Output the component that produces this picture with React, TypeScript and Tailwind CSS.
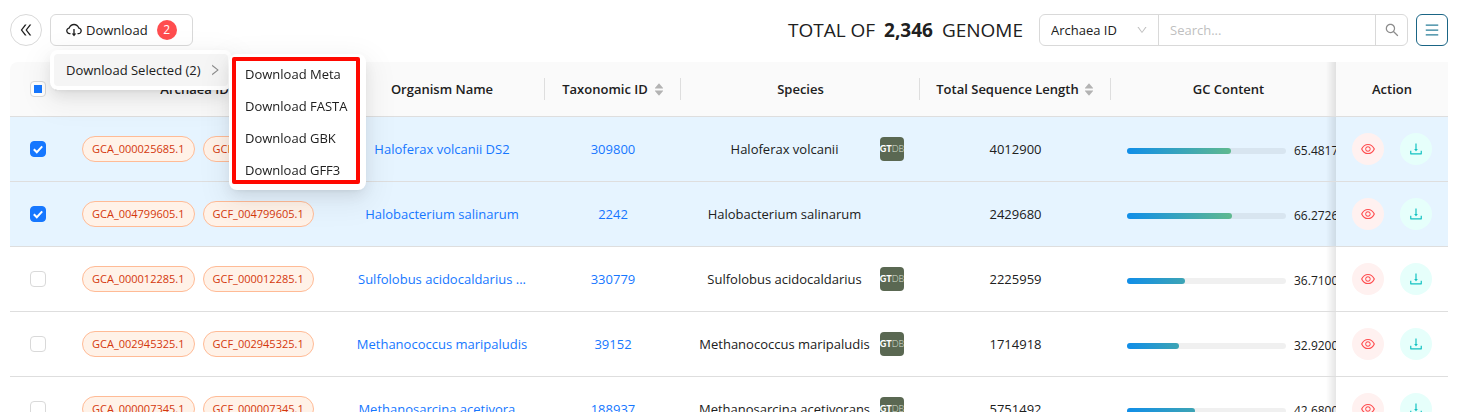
import React, { useEffect, useRef } from "react";
import {
  AiOutlineCloudDownload,
  AiOutlineDoubleLeft,
  AiOutlineDown,
  AiOutlineDownload,
  AiOutlineEye,
  AiOutlineMenu,
  AiOutlineRight,
  AiOutlineSearch,
  AiFillCaretDown,
  AiFillCaretUp,
} from "react-icons/ai";

type Genome = {
  gca: string;
  gcf: string;
  organism: string;
  taxId: string;
  species: string;
  gtdb: boolean;
  length: string;
  gc: string;
  selected: boolean;
};

const genomes: Genome[] = [
  { gca: "GCA_000025685.1", gcf: "GCF_000025685.1", organism: "Haloferax volcanii DS2", taxId: "309800", species: "Haloferax volcanii", gtdb: true, length: "4012900", gc: "65.4817", selected: true },
  { gca: "GCA_004799605.1", gcf: "GCF_004799605.1", organism: "Halobacterium salinarum", taxId: "2242", species: "Halobacterium salinarum", gtdb: false, length: "2429680", gc: "66.2726", selected: true },
  { gca: "GCA_000012285.1", gcf: "GCF_000012285.1", organism: "Sulfolobus acidocaldarius ...", taxId: "330779", species: "Sulfolobus acidocaldarius", gtdb: true, length: "2225959", gc: "36.7100", selected: false },
  { gca: "GCA_002945325.1", gcf: "GCF_002945325.1", organism: "Methanococcus maripaludis", taxId: "39152", species: "Methanococcus maripaludis", gtdb: true, length: "1714918", gc: "32.9200", selected: false },
  { gca: "GCA_000007345.1", gcf: "GCF_000007345.1", organism: "Methanosarcina acetivora...", taxId: "188937", species: "Methanosarcina acetivorans", gtdb: true, length: "5751492", gc: "42.6800", selected: false },
];

const downloads = ["Download Meta", "Download FASTA", "Download GBK", "Download GFF3"];

function Sorter() {
  return (
    <span className="ml-1 flex w-3 shrink-0 flex-col items-center text-[#b3b3b3]">
      <AiFillCaretUp size={12} className="-mb-1" />
      <AiFillCaretDown size={12} className="-mt-px" />
    </span>
  );
}

function HeadCell({ title, sortable, divider = true }: { title: string; sortable?: boolean; divider?: boolean }) {
  return (
    <th scope="col" className="relative h-[55px] border-b border-[#dedede] bg-[#fafafa] px-4 font-semibold">
      <div className="flex items-center">
        <span className="flex-1 whitespace-nowrap text-center">{title}</span>
        {sortable && <Sorter />}
      </div>
      {divider && <span className="absolute right-0 top-4 h-[22px] w-px bg-[#dedede]" />}
    </th>
  );
}

function RowCheckbox({ checked, label }: { checked: boolean; label: string }) {
  return (
    <span className="mx-auto grid size-4">
      <input
        type="checkbox"
        defaultChecked={checked}
        aria-label={label}
        className="peer size-4 appearance-none rounded border border-[#d9d9d9] bg-white [grid-area:1/1] checked:border-[#1677ff] checked:bg-[#1677ff]"
      />
      <svg viewBox="0 0 16 16" className="pointer-events-none size-4 opacity-0 [grid-area:1/1] peer-checked:opacity-100" fill="none" stroke="#fff" strokeWidth="2">
        <path d="M3.8 8.2 6.8 11.2 12.2 5.4" />
      </svg>
    </span>
  );
}

function SelectAll() {
  const ref = useRef<HTMLInputElement>(null);
  useEffect(() => {
    if (ref.current) ref.current.indeterminate = true;
  }, []);
  return (
    <span className="mx-auto grid size-4 place-items-center">
      <input ref={ref} type="checkbox" aria-label="Select all" className="peer size-4 appearance-none rounded border border-[#d9d9d9] bg-white [grid-area:1/1]" />
      <span className="pointer-events-none hidden size-2 bg-[#1677ff] [grid-area:1/1] peer-indeterminate:block" />
    </span>
  );
}

function Tag({ children }: { children: string }) {
  return (
    <span className="rounded-full border border-[#ffbb96] bg-[#fff2e8] px-[9px] text-[11px] leading-6 text-[#d4380d]">
      {children}
    </span>
  );
}

function GtdbLogo() {
  return (
    <a
      href="#gtdb"
      aria-label="GTDB"
      className="flex size-6 shrink-0 items-center justify-center overflow-hidden rounded bg-[#5a6852] font-['Lato',sans-serif] text-[9px] leading-6"
    >
      <span className="font-black text-white">GT</span>
      <span className="font-light text-[#dde2da]">DB</span>
    </a>
  );
}

function GcBar({ value }: { value: string }) {
  const endColor = Number(value) > 50 ? "#5fb98f" : "#3da4b4";
  return (
    <div className="flex items-center gap-2 pt-1">
      <div className="h-1.5 w-[159px] shrink-0 rounded-full bg-black/6">
        <div className="h-full rounded-full" style={{ width: `${value}%`, backgroundImage: `linear-gradient(to right, #108ee9, ${endColor})` }} />
      </div>
      <span className="text-[12px] leading-4">{value}%</span>
    </div>
  );
}

function PinnedEdge() {
  return (
    <span className="pointer-events-none absolute inset-y-0 -left-2.5 w-2.5 bg-linear-to-r from-transparent to-black/10" />
  );
}

export default function App() {
  return (
    <main className="h-screen overflow-x-hidden overflow-y-auto bg-white pl-2.5 pr-[19px] pt-3.5 font-['Open_Sans','Noto_Sans',sans-serif] text-[13px] leading-[22px] text-[#202020] [scrollbar-width:none]">
      <header className="flex items-center justify-between">
        <div className="flex items-center gap-2">
          <button type="button" aria-label="Collapse" className="flex size-8 items-center justify-center rounded-full border border-[#d9d9d9] bg-white">
            <AiOutlineDoubleLeft size={16} />
          </button>
          <div className="relative">
            <button type="button" aria-haspopup="menu" aria-expanded="true" className="flex h-8 items-center rounded-md border border-[#d9d9d9] bg-white pl-3.5 pr-[15px]">
              <AiOutlineCloudDownload size={18} />
              <span className="ml-[3px]">Download</span>
              <span className="ml-[9px] size-5 rounded-full bg-[#ff4d4f] text-center text-[12px] leading-5 text-white">2</span>
            </button>
            <div role="menu" className="absolute left-0 top-9 z-20 rounded-lg bg-white p-1 shadow-[0_6px_16px_rgba(0,0,0,0.08),0_3px_6px_-4px_rgba(0,0,0,0.12),0_9px_28px_8px_rgba(0,0,0,0.05)]">
              <button type="button" role="menuitem" aria-haspopup="menu" className="flex h-8 w-[174px] items-center justify-between whitespace-nowrap rounded bg-[#f5f5f5] pl-3 pr-1.5">
                Download Selected (2)
                <AiOutlineRight size={14} className="text-[#8c8c8c]" />
              </button>
              <div role="menu" className="absolute left-[179px] top-1 w-[137px] rounded-lg bg-white p-1 shadow-[0_6px_16px_rgba(0,0,0,0.08),0_3px_6px_-4px_rgba(0,0,0,0.12),0_9px_28px_8px_rgba(0,0,0,0.05)]">
                {downloads.map((label) => (
                  <button key={label} type="button" role="menuitem" className="block h-8 w-full whitespace-nowrap pl-3 text-left">
                    {label}
                  </button>
                ))}
                <span className="pointer-events-none absolute bottom-1.5 left-[3px] right-1.5 top-[3px] rounded-xs border-4 border-[#ff0800]" />
              </div>
            </div>
          </div>
        </div>
        <div className="flex items-center">
          <h1 className="mr-4 whitespace-nowrap text-[19px] leading-8">
            TOTAL OF <strong className="mx-1 font-bold">2,346</strong> GENOME
          </h1>
          <div className="flex h-8 rounded-md border border-[#d9d9d9]">
            <label className="relative flex w-[118px] items-center">
              <select aria-label="Search field" className="h-full w-full appearance-none bg-transparent pl-[11px] outline-none">
                <option>Archaea ID</option>
              </select>
              <AiOutlineDown size={12} className="pointer-events-none absolute right-2.5 text-[#bfbfbf]" />
            </label>
            <input type="text" aria-label="Search" placeholder="Search..." className="w-[218px] border-x border-[#d9d9d9] px-[11px] outline-none placeholder:text-[#bfbfbf]" />
            <button type="button" aria-label="Run search" className="flex w-[31px] items-center justify-center text-[#8c8c8c]">
              <AiOutlineSearch size={16} />
            </button>
          </div>
          <button type="button" aria-label="Columns" className="ml-2 flex size-8 items-center justify-center rounded-md border border-[#1a6585] text-[#2a7f99]">
            <AiOutlineMenu size={16} />
          </button>
        </div>
      </header>

      <div className="mt-4 overflow-x-auto rounded-tl-lg [scrollbar-width:none]">
        <table className="w-full min-w-[1464px] table-fixed border-separate border-spacing-0">
          <colgroup>
            <col className="w-[56px]" />
            <col className="w-[273px]" />
            <col className="w-[206px]" />
            <col className="w-[136px]" />
            <col className="w-[239px]" />
            <col className="w-[191px]" />
            <col className="w-[251px]" />
            <col className="w-[112px]" />
          </colgroup>
          <thead>
            <tr>
              <th scope="col" className="relative border-b border-[#dedede] bg-[#fafafa]">
                <SelectAll />
                <AiOutlineDown size={10} className="absolute right-[5px] top-[21px] text-[#bfbfbf]" />
              </th>
              <HeadCell title="Archaea ID" sortable />
              <HeadCell title="Organism Name" />
              <HeadCell title="Taxonomic ID" sortable />
              <HeadCell title="Species" />
              <HeadCell title="Total Sequence Length" sortable />
              <HeadCell title="GC Content" sortable divider={false} />
              <th scope="col" className="sticky right-0 border-b border-[#dedede] bg-[#fafafa] font-semibold">
                <PinnedEdge />
                Action
              </th>
            </tr>
          </thead>
          <tbody>
            {genomes.map((g) => {
              const bg = g.selected ? "bg-[#e6f4ff]" : "bg-white";
              const cell = `h-[65px] border-b border-[#dedede] ${bg}`;
              return (
                <tr key={g.gca}>
                  <td className={cell}>
                    <RowCheckbox checked={g.selected} label={`Select ${g.gca}`} />
                  </td>
                  <td className={`${cell} px-4`}>
                    <div className="flex gap-2 whitespace-nowrap">
                      <Tag>{g.gca}</Tag>
                      <Tag>{g.gcf}</Tag>
                    </div>
                  </td>
                  <td className={`${cell} whitespace-nowrap text-center`}>
                    <a href="#organism" className="text-[#1677ff]">{g.organism}</a>
                  </td>
                  <td className={`${cell} text-center`}>
                    <a href="#taxonomy" className="text-[#1677ff]">{g.taxId}</a>
                  </td>
                  <td className={`${cell} px-4`}>
                    <div className="flex items-center gap-2">
                      <span className="min-w-0 flex-1 whitespace-nowrap text-center">{g.species}</span>
                      {g.gtdb ? <GtdbLogo /> : <span className="w-6" />}
                    </div>
                  </td>
                  <td className={`${cell} text-center`}>{g.length}</td>
                  <td className={`${cell} px-4`}>
                    <GcBar value={g.gc} />
                  </td>
                  <td className={`${cell} sticky right-0`}>
                    <PinnedEdge />
                    <div className="flex justify-center gap-4">
                      <button type="button" aria-label={`View ${g.gca}`} className="flex size-8 items-center justify-center rounded-full bg-[#fff1f0] text-[#ff4d4f]">
                        <AiOutlineEye size={16} />
                      </button>
                      <button type="button" aria-label={`Download ${g.gca}`} className="flex size-8 items-center justify-center rounded-full bg-[#e6fffb] text-[#13c2c2]">
                        <AiOutlineDownload size={16} />
                      </button>
                    </div>
                  </td>
                </tr>
              );
            })}
          </tbody>
        </table>
      </div>
    </main>
  );
}
